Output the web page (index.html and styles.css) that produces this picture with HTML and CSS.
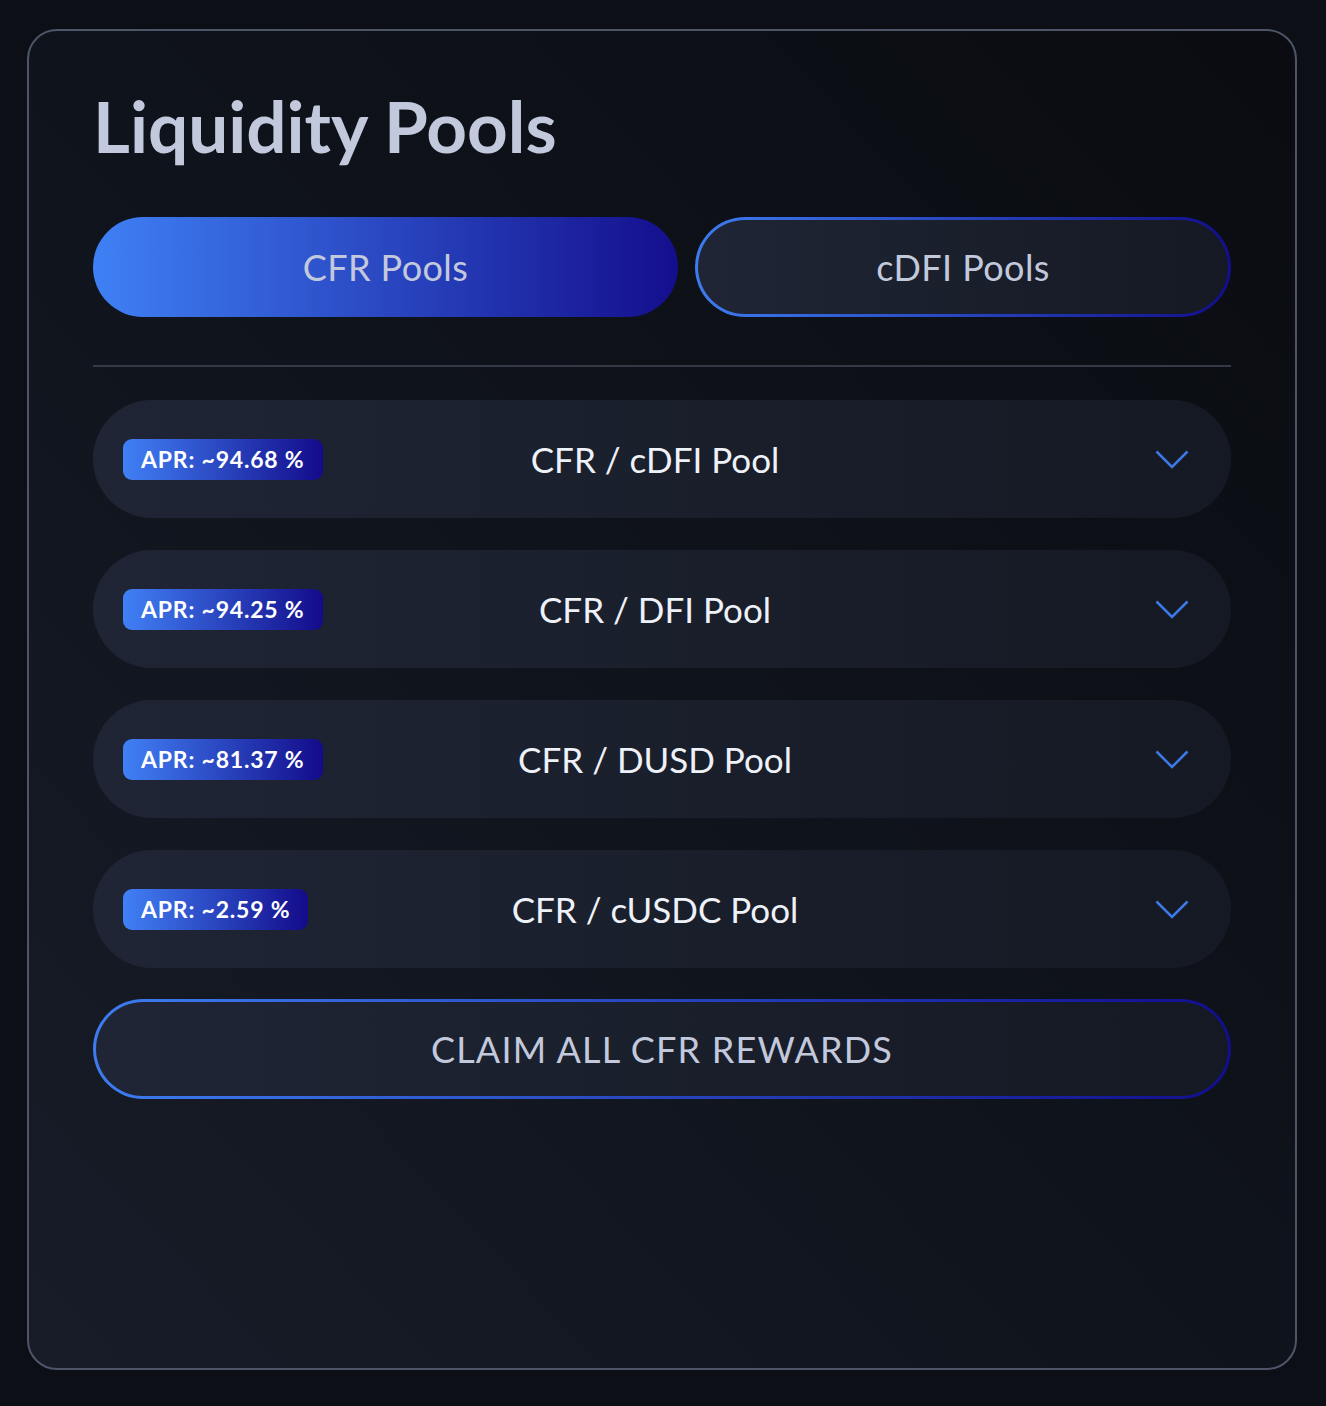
FILE: index.html
```html
<!DOCTYPE html>
<html lang="en">
<head>
<meta charset="utf-8">
<title>Liquidity Pools</title>
<link rel="stylesheet" href="styles.css">
</head>
<body>
<main class="card">
  <h1 class="title">Liquidity Pools</h1>
  <div class="tabs">
    <button class="tab tab-active">CFR Pools</button>
    <button class="tab tab-outline">cDFI Pools</button>
  </div>
  <hr class="divider">
  <ul class="pools">
    <li class="pool">
      <span class="apr">APR: ~94.68 %</span>
      <span class="pool-name">CFR / cDFI Pool</span>
      <svg class="chev" width="34" height="19" viewBox="0 0 34 19"><polyline points="1.5,1.5 17,17 32.5,1.5" fill="none" stroke="#3d7ae8" stroke-width="2.5"/></svg>
    </li>
    <li class="pool">
      <span class="apr">APR: ~94.25 %</span>
      <span class="pool-name">CFR / DFI Pool</span>
      <svg class="chev" width="34" height="19" viewBox="0 0 34 19"><polyline points="1.5,1.5 17,17 32.5,1.5" fill="none" stroke="#3d7ae8" stroke-width="2.5"/></svg>
    </li>
    <li class="pool">
      <span class="apr">APR: ~81.37 %</span>
      <span class="pool-name">CFR / DUSD Pool</span>
      <svg class="chev" width="34" height="19" viewBox="0 0 34 19"><polyline points="1.5,1.5 17,17 32.5,1.5" fill="none" stroke="#3d7ae8" stroke-width="2.5"/></svg>
    </li>
    <li class="pool">
      <span class="apr">APR: ~2.59 %</span>
      <span class="pool-name">CFR / cUSDC Pool</span>
      <svg class="chev" width="34" height="19" viewBox="0 0 34 19"><polyline points="1.5,1.5 17,17 32.5,1.5" fill="none" stroke="#3d7ae8" stroke-width="2.5"/></svg>
    </li>
  </ul>
  <button class="claim">CLAIM ALL CFR REWARDS</button>
</main>
</body>
</html>
```
FILE: styles.css
```css
* { box-sizing: border-box; }
html, body { margin: 0; }
body {
  background: #0c0f16;
  font-family: Lato, "Noto Sans", sans-serif;
  padding: 29px 29px 36px 27px;
  height: 1406px;
}
.card {
  width: 1270px;
  height: 1341px;
  border: 2px solid #4e5568;
  border-radius: 30px;
  background: linear-gradient(to top right, #171c28 0%, #0f131b 50%, #0a0c11 100%);
  padding: 46px 64px 0 64px;
}
.title {
  margin: 0;
  font-size: 71px;
  font-weight: 700;
  line-height: 98px;
  color: #c3c9dd;
}
.tabs {
  margin-top: 42px;
  display: grid;
  grid-template-columns: 585px 1fr;
  gap: 17px;
}
.tab {
  height: 100px;
  border-radius: 50px;
  font-family: inherit;
  font-size: 36px;
  letter-spacing: 0.4px;
  color: #c3c9dd;
  cursor: pointer;
}
.tab-active {
  border: none;
  background: linear-gradient(to right, #3f80f5, #140e8d);
}
.tab-outline, .claim {
  border: 3px solid transparent;
  background:
    linear-gradient(to right, #1f2535, #151923) padding-box,
    linear-gradient(to right, #3d7cf0, #120e8c) border-box;
}
.divider {
  margin: 48px 0 0 0;
  border: none;
  height: 2px;
  background: #343945;
}
.pools {
  list-style: none;
  margin: 33px 0 0 0;
  padding: 0;
  display: flex;
  flex-direction: column;
  gap: 32px;
}
.pool {
  height: 118px;
  border-radius: 59px;
  background: linear-gradient(to right, #1f2535, #151923);
  display: grid;
  grid-template-columns: 1fr auto 1fr;
  align-items: center;
  padding: 0 42px 0 30px;
}
.apr {
  justify-self: start;
  background: linear-gradient(to right, #4180f5, #130b8a);
  color: #ffffff;
  font-weight: 700;
  font-size: 23px;
  letter-spacing: 0.8px;
  line-height: 41px;
  height: 41px;
  padding: 0 18px;
  border-radius: 9px;
}
.pool-name {
  font-size: 35px;
  color: #eef1f8;
  margin-right: 2px;
}
.chev { justify-self: end; }
.claim {
  margin-top: 31px;
  width: 100%;
  height: 100px;
  border-radius: 50px;
  font-family: inherit;
  font-size: 36px;
  letter-spacing: 1.2px;
  color: #c3c9dd;
  cursor: pointer;
}
```
